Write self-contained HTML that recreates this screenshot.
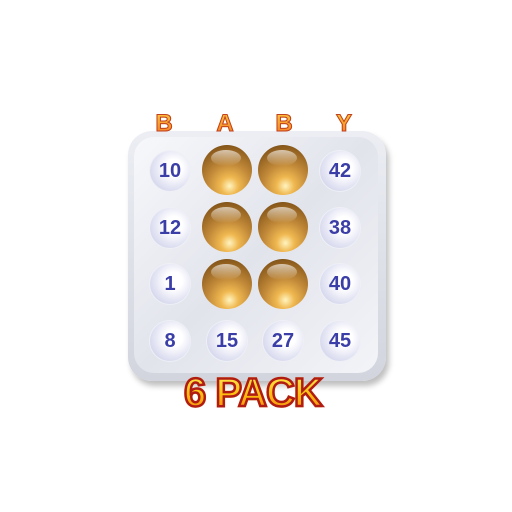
<!DOCTYPE html><html><head><style>
body{margin:0;width:512px;height:512px;background:#fff;position:relative;overflow:hidden;font-family:"Liberation Sans",sans-serif}
.board{position:absolute;left:128px;top:131px;width:258px;height:250px;border-radius:24px;background:linear-gradient(180deg,#eceef4,#d2d4de);box-shadow:3px 5px 6px rgba(0,0,0,.25)}
.face{position:absolute;left:134px;top:137px;width:244px;height:236px;border-radius:20px;background:linear-gradient(135deg,#f7f8fb,#e2e4ec 50%,#f3f4f8)}
.c{position:absolute;width:40px;height:40px;margin:-20px 0 0 -20px;border-radius:50%;background:radial-gradient(circle at 60% 42%,#fff 25%,#e2e3f3 60%,#c4c6e2 100%);box-shadow:0 0 0 1px #eef0f6;color:#3a3ea6;font-weight:bold;font-size:20px;text-align:center;line-height:41px}
.g{position:absolute;width:50px;height:50px;margin:-25px 0 0 -25px;border-radius:50%;background:radial-gradient(circle at 55% 82%,#fff4c0 0%,#f0b850 18%,#c08838 45%,#8a5a1c 80%,#4e300a 100%)}
.g:after{content:"";position:absolute;left:9px;top:5px;width:30px;height:16px;border-radius:50%;background:linear-gradient(#ffffffa0,#fff0)}
.l{position:absolute;top:110px;font-weight:900;font-size:24px;width:30px;text-align:center;margin-left:-15px;background:linear-gradient(#ffd040,#f07020);-webkit-background-clip:text;color:transparent;-webkit-text-stroke:1px #c04020}
.t{position:absolute;left:184px;top:371px;font-weight:900;font-size:40px;letter-spacing:-1px;background:linear-gradient(#fff060,#ffc010 50%,#f08010);-webkit-background-clip:text;color:transparent;-webkit-text-stroke:2.5px #b01c14}
</style></head><body>
<div class="board"></div><div class="face"></div>
<div class="l" style="left:164px">B</div><div class="l" style="left:225px">A</div><div class="l" style="left:284px">B</div><div class="l" style="left:344px">Y</div>
<div class="c" style="left:170px;top:171px">10</div>
<div class="c" style="left:170px;top:228px">12</div>
<div class="c" style="left:170px;top:284px">1</div>
<div class="c" style="left:170px;top:341px">8</div>
<div class="c" style="left:227px;top:341px">15</div>
<div class="c" style="left:283px;top:341px">27</div>
<div class="c" style="left:340px;top:171px">42</div>
<div class="c" style="left:340px;top:228px">38</div>
<div class="c" style="left:340px;top:284px">40</div>
<div class="c" style="left:340px;top:341px">45</div>
<div class="g" style="left:227px;top:170px"></div><div class="g" style="left:283px;top:170px"></div>
<div class="g" style="left:227px;top:227px"></div><div class="g" style="left:283px;top:227px"></div>
<div class="g" style="left:227px;top:284px"></div><div class="g" style="left:283px;top:284px"></div>
<div class="t">6 PACK</div>
</body></html>
